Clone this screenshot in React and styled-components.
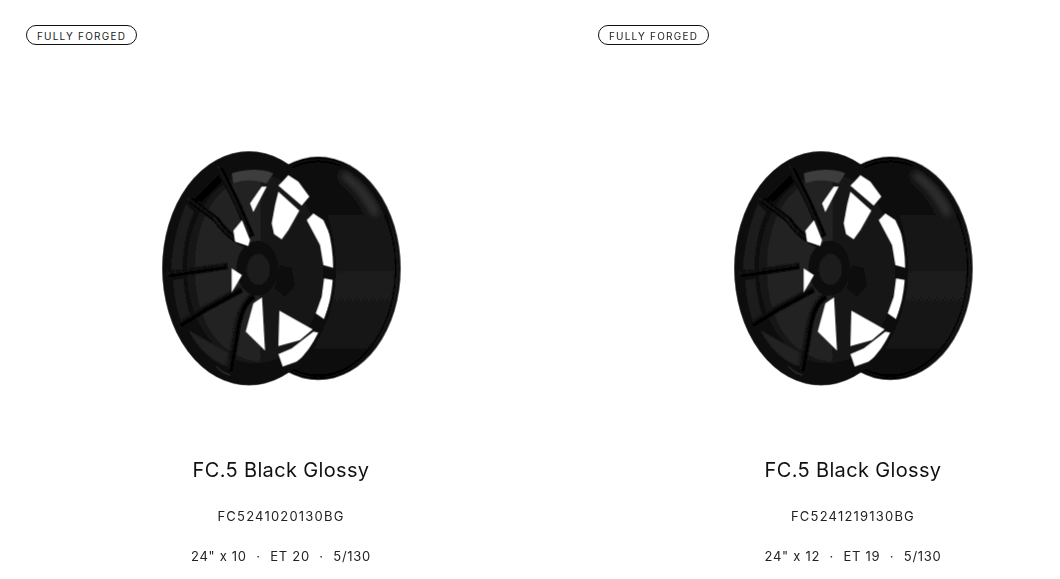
import React from "react";
import styled, { createGlobalStyle } from "styled-components";

const GlobalStyle = createGlobalStyle`
  html, body {
    margin: 0;
    padding: 0;
    background: #fff;
    overflow: hidden;
  }
  body {
    font-family: Inter, "Liberation Sans", sans-serif;
    color: #111;
  }
`;

const Grid = styled.div`
  display: grid;
  grid-template-columns: 562px 488px;
  column-gap: 10px;
  width: 1060px;
  height: 579px;
  overflow: hidden;
`;

const Card = styled.article`
  display: flex;
  flex-direction: column;
  padding-top: 25px;
`;

const BadgeRow = styled.div`
  padding-left: 26px;
`;

const Badge = styled.span`
  display: flex;
  align-items: center;
  justify-content: center;
  box-sizing: border-box;
  width: 111px;
  height: 20px;
  border: 1px solid #111;
  border-radius: 10px;
  font-size: 10px;
  letter-spacing: 1.22px;
  color: #222;
  padding-top: 1px;
`;

const Body = styled.div`
  display: flex;
  flex-direction: column;
  align-items: center;
  width: 414px;
  margin-left: 74px;
`;

const WheelBox = styled.div`
  width: 260px;
  height: 255px;
  margin-top: 95px;
  svg {
    display: block;
  }
`;

const Title = styled.h2`
  margin: 63px 0 0;
  font-size: 20px;
  line-height: 24px;
  font-weight: 400;
  letter-spacing: 0.34px;
  color: #111;
`;

const Sku = styled.div`
  margin-top: 26px;
  font-size: 13px;
  line-height: 16px;
  letter-spacing: 1.2px;
  color: #222;
`;

const Specs = styled.div`
  display: flex;
  gap: 9.5px;
  margin-top: 24px;
  font-size: 13px;
  line-height: 16px;
  letter-spacing: 0.72px;
  color: #222;
`;

const windows = [
  "397,125 415,105 445,125 478,170 455,197 385,137",
  "385,155 448,212 415,270 395,298 372,282 365,250 375,195",
  "490,220 520,240 545,295 555,385 520,375 510,315 470,240",
  "522,415 551,420 542,480 522,537 497,520 515,470",
  "388,512 488,568 450,600 385,618",
  "385,642 425,625 490,575 505,578 472,640 440,665 398,680",
  "287,575 310,490 336,472 345,632",
  "245,385 276,405 245,458",
  "250,272 276,240 300,300 295,318 255,305",
  "300,190 335,140 350,140 310,216",
];

const spokes = [
  "M296,315 Q240,300 200,240 L120,180",
  "M305,290 L262,190 L210,85",
  "M232,378 L140,392 L55,405",
  "M275,448 L170,505 L90,555",
  "M312,468 Q270,490 258,590 L240,695",
];

const Wheel = () => (
  <svg width="260" height="255" viewBox="3 0 780 765">
    <defs>
      <linearGradient id="barrel" x1="0" y1="0" x2="0" y2="1">
        <stop offset="0" stopColor="#0a0a0a" />
        <stop offset="0.3" stopColor="#131313" />
        <stop offset="0.55" stopColor="#1b1b1b" />
        <stop offset="0.78" stopColor="#181818" />
        <stop offset="1" stopColor="#070707" />
      </linearGradient>
      <filter id="soft" x="-5%" y="-5%" width="110%" height="110%">
        <feGaussianBlur stdDeviation="1.5" />
      </filter>
      <filter id="glow" x="-40%" y="-40%" width="180%" height="180%">
        <feGaussianBlur stdDeviation="12" />
      </filter>
      <filter id="sheen" x="-20%" y="-20%" width="140%" height="140%">
        <feGaussianBlur stdDeviation="3" />
      </filter>
    </defs>
    <g filter="url(#soft)">
      {/* barrel */}
      <ellipse cx="505" cy="385" rx="247" ry="335" fill="url(#barrel)" />
      <ellipse cx="505" cy="385" rx="232" ry="321" fill="none" stroke="#040404" strokeWidth="5" />
      <ellipse cx="505" cy="385" rx="243" ry="331" fill="none" stroke="#040404" strokeWidth="3" />
      <path d="M575,100 C625,135 660,180 680,228" fill="none" stroke="#444" strokeWidth="20" filter="url(#glow)" />
      {/* face */}
      <ellipse cx="297" cy="385" rx="259" ry="350" fill="#0e0e0e" />
      <ellipse cx="315" cy="385" rx="205" ry="285" fill="#181818" />
      <path d="M135,385 C135,250 190,120 330,105 L330,665 C190,650 135,520 135,385 Z" fill="#232323" />
      <path d="M245,100 C290,85 340,85 370,100 L350,130 C310,118 280,118 250,130 Z" fill="#3c3c3c" />
      <path d="M130,180 L205,105 L215,125 L155,185 Z" fill="#000" />
      <path d="M62,390 C68,300 88,240 108,190 L133,215 C108,270 98,330 98,390 Z" fill="#1c1c1c" />
      <path d="M70,420 L100,415 C105,470 115,510 125,535 L95,550 C80,510 70,460 70,420 Z" fill="#1c1c1c" />
      <path d="M115,570 L240,640 L235,680 C190,670 140,625 115,570 Z" fill="#202020" />
      {spokes.map((d) => (
        <path key={d} d={d} fill="none" stroke="#060606" strokeWidth="19" strokeLinejoin="round" />
      ))}
      <g filter="url(#sheen)">
        {spokes.map((d) => (
          <path key={d} d={d} fill="none" stroke="#1f1f1f" strokeWidth="5" transform="translate(-6,-5)" />
        ))}
      </g>
      {/* hub */}
      <ellipse cx="322" cy="385" rx="62" ry="82" fill="#0a0a0a" />
      <ellipse cx="325" cy="388" rx="36" ry="48" fill="#1a1a1a" />
      <ellipse cx="325" cy="388" rx="27" ry="37" fill="none" stroke="#2a2a2a" strokeWidth="3" strokeDasharray="5 4" />
      <path d="M390,375 L425,385 L435,440 L405,470 L375,445 Z" fill="#0a0a0a" />
      {/* openings between the spokes */}
      {windows.map((p) => (
        <polygon key={p} points={p} fill="#fff" />
      ))}
      {/* rim edge */}
      <ellipse cx="297" cy="385" rx="256" ry="347" fill="none" stroke="#080808" strokeWidth="7" />
      <path d="M200,680 C215,695 225,700 240,705" fill="none" stroke="#444" strokeWidth="3" />
    </g>
  </svg>
);

const products = [
  { sku: "FC5241020130BG", size: '24" x 10', et: "ET 20" },
  { sku: "FC5241219130BG", size: '24" x 12', et: "ET 19" },
];

export default function App() {
  return (
    <>
      <GlobalStyle />
      <Grid>
        {products.map((item) => (
          <Card key={item.sku}>
            <BadgeRow>
              <Badge>FULLY FORGED</Badge>
            </BadgeRow>
            <Body>
              <WheelBox>
                <Wheel />
              </WheelBox>
              <Title>FC.5 Black Glossy</Title>
              <Sku>{item.sku}</Sku>
              <Specs>
                <span>{item.size}</span>
                <span>·</span>
                <span>{item.et}</span>
                <span>·</span>
                <span>5/130</span>
              </Specs>
            </Body>
          </Card>
        ))}
      </Grid>
    </>
  );
}
